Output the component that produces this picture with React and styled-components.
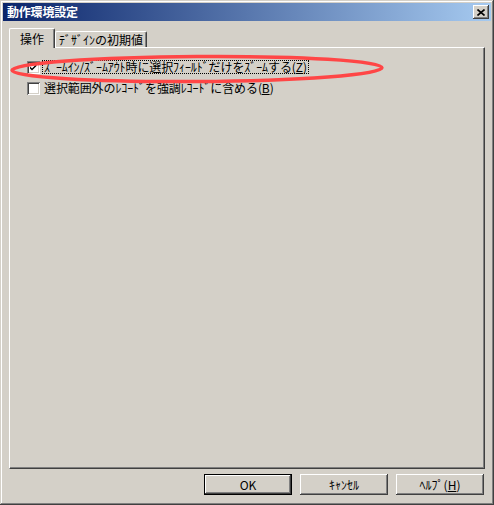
import React from 'react';
import styled, { createGlobalStyle } from 'styled-components';

// Variables
const colors = {
  face: '#d4d0c8',
  light: '#ffffff',
  shadow: '#808080',
  dark: '#404040',
  titleFrom: '#0a246a',
  titleTo: '#a6caf0',
  mark: '#ff4646'
};

const font = {
  ui: '"MS UI Gothic", "Noto Sans CJK JP", "DejaVu Sans", sans-serif'
};

const GlobalStyle = createGlobalStyle`
  html, body {
    margin: 0;
    padding: 0;
    background: ${colors.face};
  }
  body {
    font-family: ${font.ui};
    font-size: 12px;
  }
`;

// ===========================================================================================
// styled-components
// ===========================================================================================
const Window = styled.div`
  position: relative;
  box-sizing: border-box;
  width: 494px;
  height: 505px;
  padding: 3px;
  display: flex;
  flex-direction: column;
  background: ${colors.face};
  box-shadow: inset -1px -1px ${colors.dark}, inset 1px 1px ${colors.face},
    inset -2px -2px ${colors.shadow}, inset 2px 2px ${colors.light};
`;

const TitleBar = styled.div`
  height: 18px;
  display: flex;
  align-items: center;
  justify-content: space-between;
  padding: 0 2px 0 4px;
  background: linear-gradient(to right, ${colors.titleFrom}, ${colors.titleTo});
`;

const Title = styled.span`
  color: #fff;
  font-weight: bold;
  font-size: 12px;
  line-height: 14px;
  letter-spacing: -0.2px;
`;

const CloseBtn = styled.div`
  width: 16px;
  height: 14px;
  display: flex;
  align-items: center;
  justify-content: center;
  background: ${colors.face};
  box-shadow: inset -1px -1px ${colors.dark}, inset 1px 1px ${colors.light},
    inset -2px -2px ${colors.shadow}, inset 2px 2px ${colors.face};
`;

const Body = styled.div`
  flex: 1;
  display: flex;
  flex-direction: column;
  padding: 7px 6px 7px 6px;
`;

const TabRow = styled.div`
  display: flex;
  align-items: flex-end;
  height: 19px;
  position: relative;
  z-index: 1;
`;

const Tab = styled.div`
  box-sizing: border-box;
  height: ${p => (p.$active ? '20px' : '16px')};
  margin-bottom: ${p => (p.$active ? '-1px' : '0')};
  width: ${p => p.$width}px;
  display: flex;
  align-items: center;
  justify-content: center;
  padding-top: ${p => (p.$active ? '0' : '1px')};
  background: ${colors.face};
  border-top: 1px solid ${colors.light};
  border-left: 1px solid ${colors.light};
  border-right: 1px solid ${colors.dark};
  border-top-left-radius: 2px;
  border-top-right-radius: 2px;
  box-shadow: inset -1px 0 ${colors.shadow};
  font-size: 12px;
  line-height: 14px;
  color: #000;
  white-space: nowrap;
`;

const Panel = styled.div`
  flex: 1;
  position: relative;
  display: flex;
  flex-direction: column;
  gap: 7px;
  padding: 12px 16px;
  border: 1px solid;
  border-color: ${colors.light} ${colors.dark} ${colors.dark} ${colors.light};
  box-shadow: inset -1px -1px ${colors.shadow};
`;

const CheckRow = styled.label`
  display: flex;
  align-items: center;
  gap: 3px;
  height: 14px;
  padding-left: 1px;
`;

const Box = styled.span`
  box-sizing: border-box;
  width: 13px;
  height: 13px;
  display: flex;
  align-items: center;
  justify-content: center;
  background: #fff;
  box-shadow: inset 1px 1px ${colors.shadow}, inset -1px -1px ${colors.light},
    inset 2px 2px ${colors.dark}, inset -2px -2px ${colors.face};
`;

const Label = styled.span`
  font-size: 12px;
  line-height: 12px;
  padding: 0 1px;
  letter-spacing: -0.1px;
  color: #000;
  white-space: nowrap;
  outline: ${p => (p.$focus ? '1px dotted #000' : 'none')};
  outline-offset: 0;
`;

const Key = styled.u`
  text-decoration: underline;
  text-underline-offset: 1px;
`;

const Mark = styled.svg`
  position: absolute;
  left: 0;
  top: 6px;
  overflow: visible;
  pointer-events: none;
`;

const ButtonRow = styled.div`
  display: flex;
  justify-content: flex-end;
  gap: 8px;
  margin-top: 5px;
  padding-right: 1px;
`;

const Button = styled.div`
  box-sizing: border-box;
  width: 88px;
  height: 21px;
  display: flex;
  align-items: center;
  justify-content: center;
  font-size: 12px;
  line-height: 12px;
  color: #000;
  background: ${colors.face};
  border: ${p => (p.$default ? '1px solid #000' : 'none')};
  box-shadow: inset -1px -1px ${colors.dark}, inset 1px 1px ${colors.light},
    inset -2px -2px ${colors.shadow}, inset 2px 2px ${colors.face};
`;

// ===========================================================================================
// Main
// ===========================================================================================
const Check = () => (
  <svg width="9" height="9" viewBox="0 0 9 9">
    <path d="M1 3.5 L3 5.5 L7.5 1 L7.5 3 L3 7.5 L1 5.5 Z" fill="#000" />
  </svg>
);

const App = () => {
  return (
    <>
      <GlobalStyle />
      <Window>
        <TitleBar>
          <Title>動作環境設定</Title>
          <CloseBtn>
            <svg width="8" height="7" viewBox="0 0 8 7">
              <path d="M0.5 0.5 L7.5 6.5 M7.5 0.5 L0.5 6.5" stroke="#000" strokeWidth="1.6" />
            </svg>
          </CloseBtn>
        </TitleBar>
        <Body>
          <TabRow>
            <Tab $active $width={46}>操作</Tab>
            <Tab $width={92}>ﾃﾞｻﾞｲﾝの初期値</Tab>
          </TabRow>
          <Panel>
            <CheckRow>
              <Box><Check /></Box>
              <Label $focus>ｽﾞｰﾑｲﾝ/ｽﾞｰﾑｱｳﾄ時に選択ﾌｨｰﾙﾄﾞだけをｽﾞｰﾑする(<Key>Z</Key>)</Label>
            </CheckRow>
            <CheckRow>
              <Box />
              <Label>選択範囲外のﾚｺｰﾄﾞを強調ﾚｺｰﾄﾞに含める(<Key>B</Key>)</Label>
            </CheckRow>
            <Mark width="376" height="30" viewBox="0 0 376 30">
              <ellipse cx="187" cy="15" rx="185" ry="12.5" fill="none"
                stroke={colors.mark} strokeWidth="3.5" transform="rotate(-0.4 187 15)" />
            </Mark>
          </Panel>
          <ButtonRow>
            <Button $default>OK</Button>
            <Button>ｷｬﾝｾﾙ</Button>
            <Button>ﾍﾙﾌﾟ(<Key>H</Key>)</Button>
          </ButtonRow>
        </Body>
      </Window>
    </>
  );
};

export default App;
